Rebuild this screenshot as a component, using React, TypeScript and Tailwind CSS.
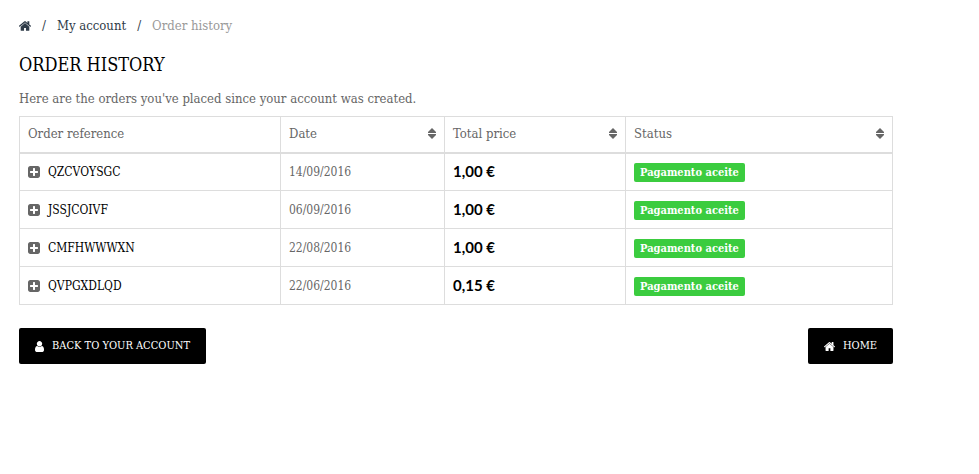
import React from 'react'

interface IconProps {
  glyph: { viewBox: string; path: string }
  className?: string
}

interface Order {
  reference: string
  date: string
  total: string
  status: string
}

const HOME = {
  viewBox: '96 96 1600 1600',
  path: 'M1472 992v480q0 26-19 45t-45 19h-384v-384h-256v384h-384q-26 0-45-19t-19-45v-480q0-1 .5-3t.5-3l575-474 575 474q1 2 1 6zm223-69l-62 74q-8 9-21 11h-3q-13 0-21-7l-692-577-692 577q-12 8-24 7-13-2-21-11l-62-74q-8-10-7-23.5t11-21.5l719-599q32-26 76-26t76 26l244 204v-195q0-14 9-23t23-9h192q14 0 23 9t9 23v408l219 182q10 8 11 21.5t-7 23.5z',
}
const USER = {
  viewBox: '256 128 1280 1536',
  path: 'M1536 1399q0 109-62.5 187t-150.5 78h-854q-88 0-150.5-78t-62.5-187q0-85 8.5-160.5t31.5-152 58.5-131 94-89 134.5-34.5q131 128 313 128t313-128q76 0 134.5 34.5t94 89 58.5 131 31.5 152 8.5 160.5zm-256-887q0 159-112.5 271.5t-271.5 112.5-271.5-112.5-112.5-271.5 112.5-271.5 271.5-112.5 271.5 112.5 112.5 271.5z',
}
const PLUS_SQUARE = {
  viewBox: '128 128 1536 1536',
  path: 'M1408 960v-128q0-26-19-45t-45-19h-320v-320q0-26-19-45t-45-19h-128q-26 0-45 19t-19 45v320h-320q-26 0-45 19t-19 45v128q0 26 19 45t45 19h320v320q0 26 19 45t45 19h128q26 0 45-19t19-45v-320h320q26 0 45-19t19-45zm256-544v960q0 119-84.5 203.5t-203.5 84.5h-960q-119 0-203.5-84.5t-84.5-203.5v-960q0-119 84.5-203.5t203.5-84.5h960q119 0 203.5 84.5t84.5 203.5z',
}

const orders: Order[] = [
  { reference: 'QZCVOYSGC', date: '14/09/2016', total: '1,00 €', status: 'Pagamento aceite' },
  { reference: 'JSSJCOIVF', date: '06/09/2016', total: '1,00 €', status: 'Pagamento aceite' },
  { reference: 'CMFHWWWXN', date: '22/08/2016', total: '1,00 €', status: 'Pagamento aceite' },
  { reference: 'QVPGXDLQD', date: '22/06/2016', total: '0,15 €', status: 'Pagamento aceite' },
]

const columns = [
  { label: 'Order reference', width: 'w-[261px]', sortable: false },
  { label: 'Date', width: 'w-[164px]', sortable: true },
  { label: 'Total price', width: 'w-[181px]', sortable: true },
  { label: 'Status', width: 'w-auto', sortable: true },
]

function Icon({ glyph, className }: IconProps) {
  return (
    <svg viewBox={glyph.viewBox} fill="currentColor" aria-hidden="true" className={className}>
      <path d={glyph.path} />
    </svg>
  )
}

function SortIcon() {
  return (
    <svg viewBox="0 0 8 12" fill="currentColor" aria-hidden="true" className="h-3 w-2">
      <path d="M4 0 L8 4 V5 H0 V4 Z M0 6 H8 V7 L4 11 L0 7 Z" />
    </svg>
  )
}

export default function App() {
  return (
    <main className="max-w-[893px] pl-[19px] pt-4 font-['DejaVu_Serif_Condensed','DejaVu_Serif',serif] text-[13px] leading-5 text-[#666]">
      <nav aria-label="Breadcrumb" className="flex items-center gap-[11px] text-[#2f3b48]">
        <a href="#home" aria-label="Home">
          <Icon glyph={HOME} className="size-3" />
        </a>
        <span>/</span>
        <a href="#account">My account</a>
        <span>/</span>
        <span className="text-[#999]">Order history</span>
      </nav>

      <h1 className="mt-[17px] text-[18px] leading-6 text-black uppercase">Order history</h1>
      <p className="mt-3">Here are the orders you've placed since your account was created.</p>

      <table className="mt-[7px] w-full table-fixed border-collapse border border-[#ddd]">
        <thead>
          <tr className="h-9 border-b-2 border-[#ddd]">
            {columns.map(({ label, width, sortable }) => (
              <th key={label} className={`${width} border-x border-[#ddd] px-2 text-left font-normal`}>
                {sortable ? (
                  <button type="button" className="flex w-full items-center justify-between">
                    {label}
                    <SortIcon />
                  </button>
                ) : (
                  label
                )}
              </th>
            ))}
          </tr>
        </thead>
        <tbody className="text-[12px]">
          {orders.map((order) => (
            <tr key={order.reference} className="h-[38px]">
              <td className="border border-[#ddd] px-2">
                <div className="flex items-center gap-2">
                  <button type="button" aria-label={`Show ${order.reference}`}>
                    <Icon glyph={PLUS_SQUARE} className="size-3" />
                  </button>
                  <a href="#order" className="text-black">
                    {order.reference}
                  </a>
                </div>
              </td>
              <td className="border border-[#ddd] px-2">{order.date}</td>
              <td className="border border-[#ddd] px-2 pb-[2px] font-[Lato,sans-serif] text-[15px] font-bold text-black">
                {order.total}
              </td>
              <td className="border border-[#ddd] px-2">
                <span className="mt-[2px] block w-fit rounded-xs bg-[#3bcc3f] px-[6px] text-[11px] leading-[19px] font-bold text-white">
                  {order.status}
                </span>
              </td>
            </tr>
          ))}
        </tbody>
      </table>

      <div className="mt-[23px] flex items-center justify-between text-[11px] text-white uppercase">
        <a href="#account" className="flex h-9 items-center gap-2 rounded-xs bg-black px-4">
          <Icon glyph={USER} className="h-[11px] w-[9px]" />
          Back to your account
        </a>
        <a href="#home" className="flex h-9 items-center gap-2 rounded-xs bg-black px-4">
          <Icon glyph={HOME} className="size-[11px]" />
          Home
        </a>
      </div>
    </main>
  )
}
